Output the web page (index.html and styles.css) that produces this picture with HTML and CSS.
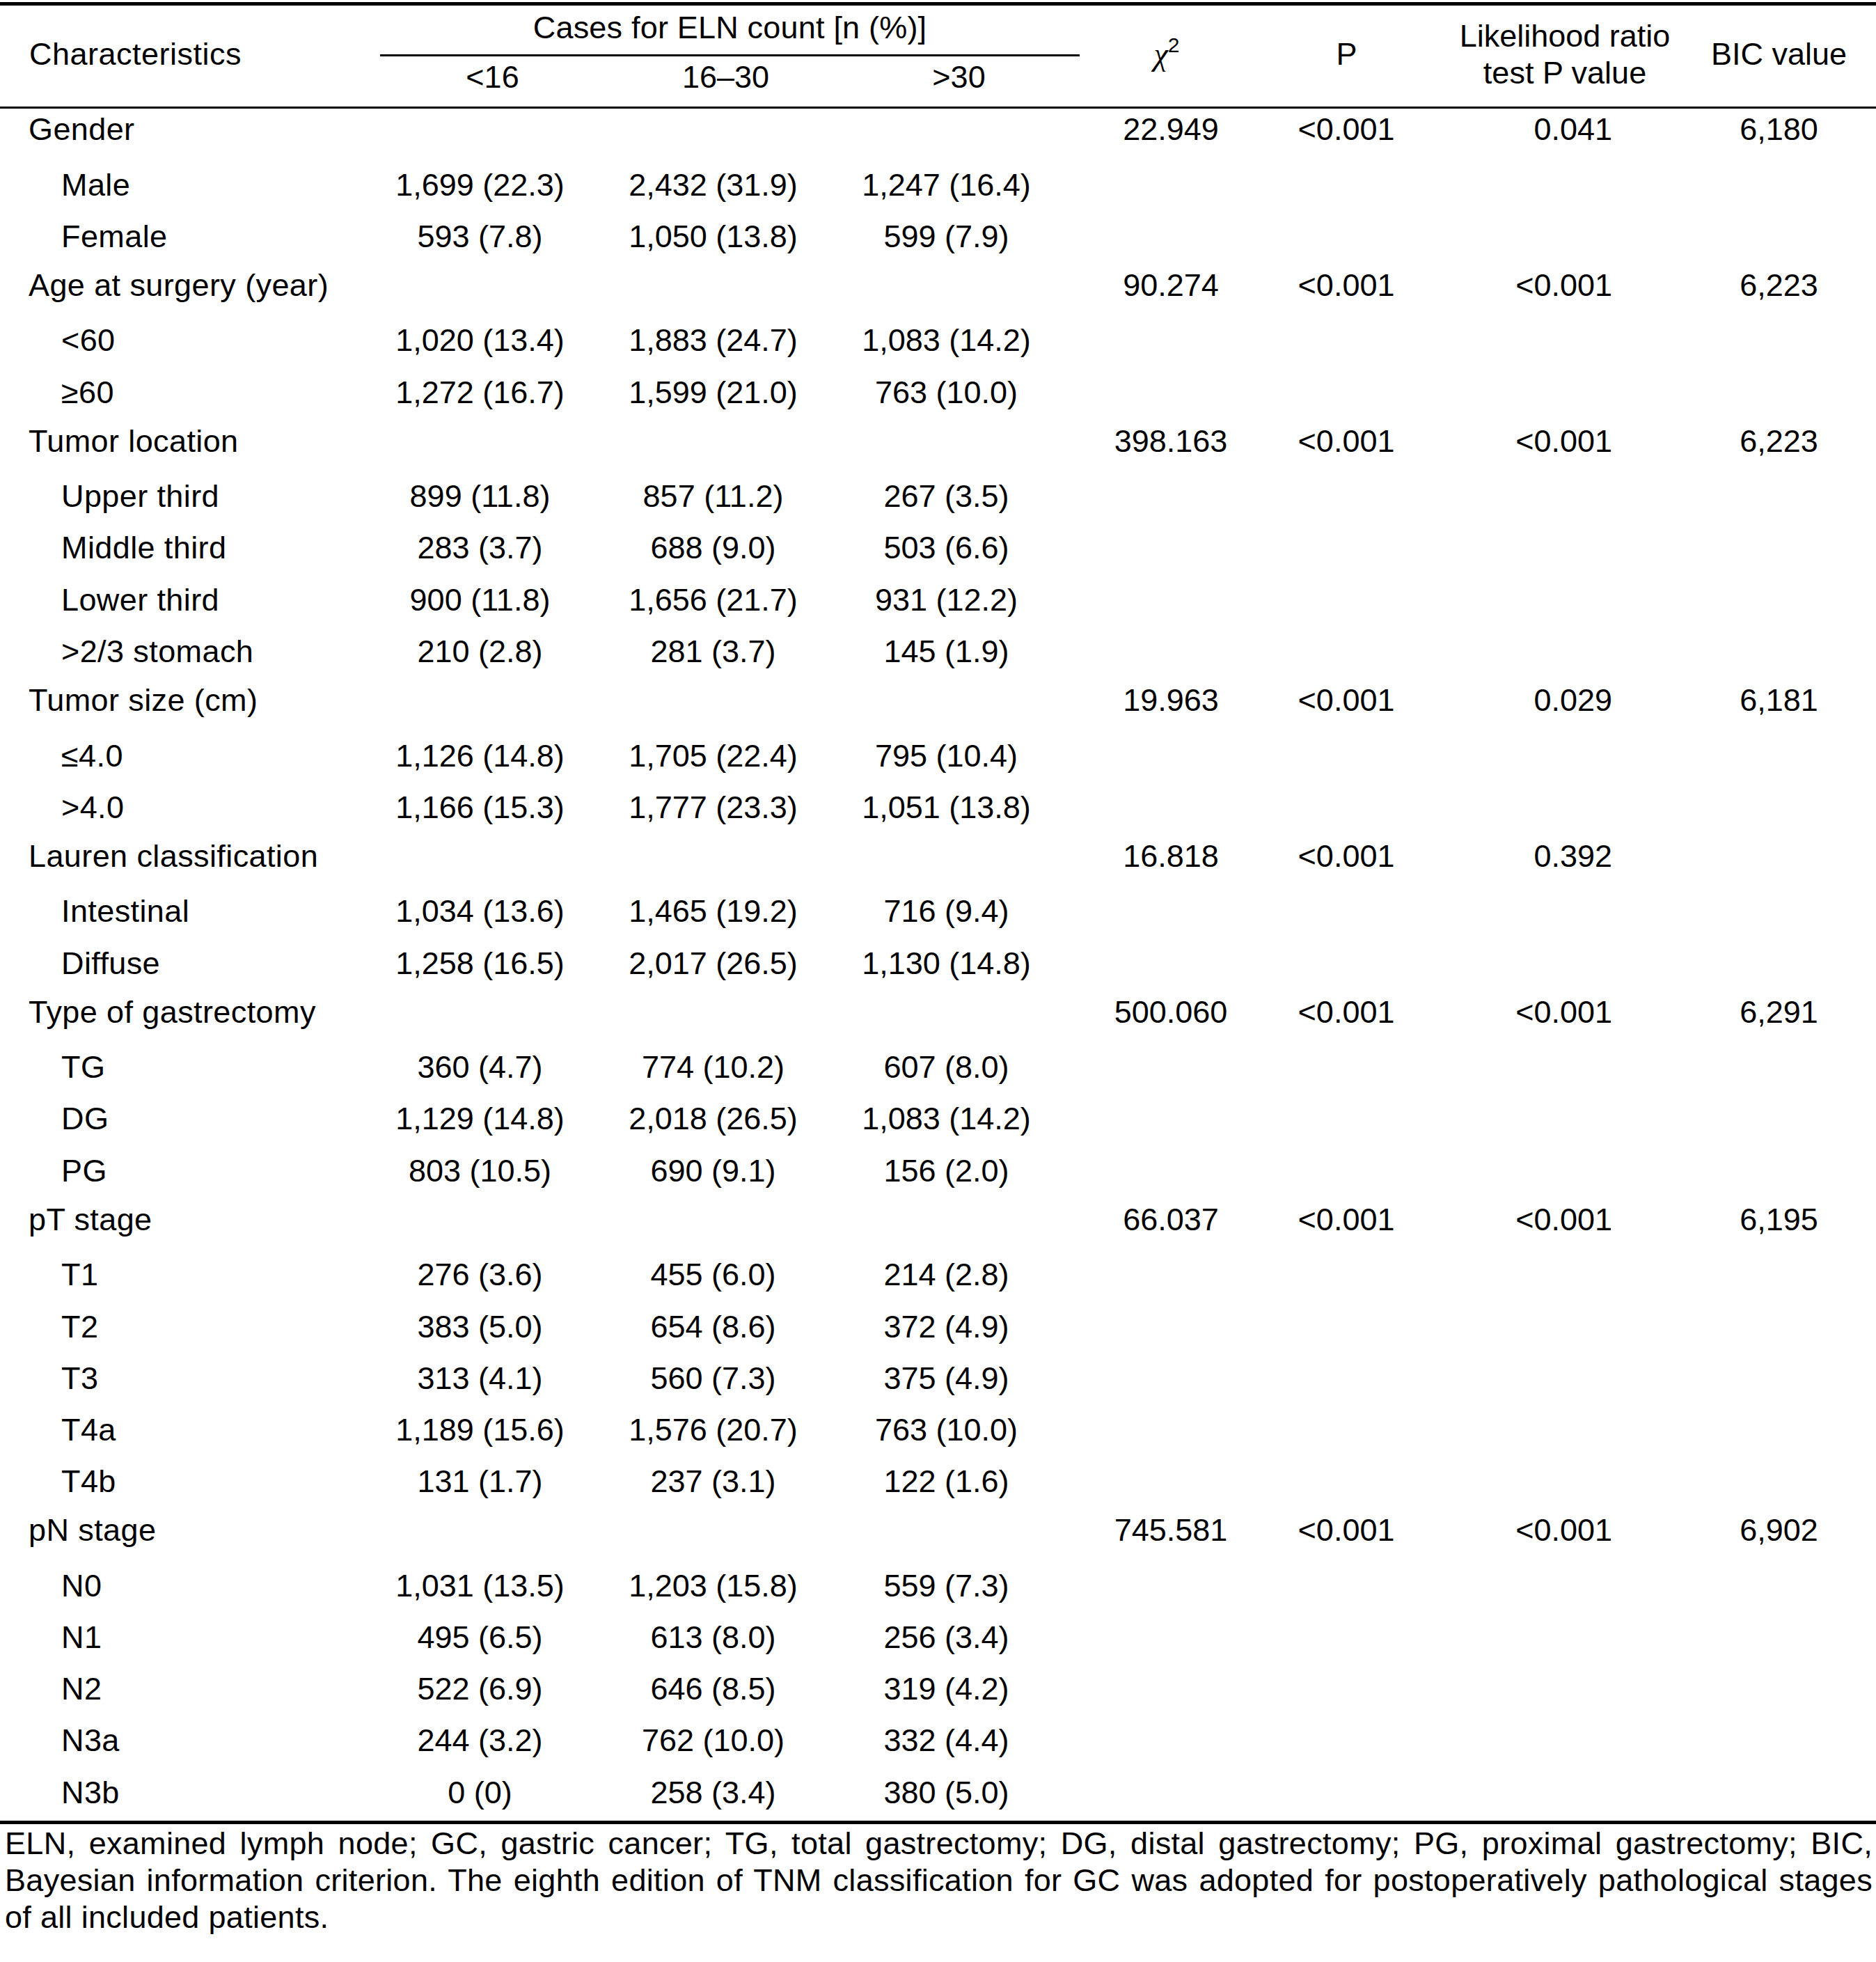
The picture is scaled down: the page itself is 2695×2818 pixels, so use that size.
FILE: index.html
```html
<!DOCTYPE html>
<html lang="en">
<head>
<meta charset="utf-8">
<title>ELN count table</title>
<link rel="stylesheet" href="styles.css">
</head>
<body>
<div class="page">
<table class="tbl">
  <colgroup>
    <col class="c-lab"><col class="c-n"><col class="c-n"><col class="c-n"><col class="c-chi"><col class="c-p"><col class="c-lr"><col class="c-bic">
  </colgroup>
  <thead>
    <tr class="h1">
      <th rowspan="2" class="h-lab">Characteristics</th>
      <th colspan="3" class="h-group">Cases for ELN count [n (%)]</th>
      <th rowspan="2" class="h-chi"><span class="chi">χ</span><sup>2</sup></th>
      <th rowspan="2" class="h-p">P</th>
      <th rowspan="2" class="h-lr">Likelihood ratio<br>test P value</th>
      <th rowspan="2" class="h-bic">BIC value</th>
    </tr>
    <tr class="h2">
      <th>&lt;16</th>
      <th>16–30</th>
      <th>&gt;30</th>
    </tr>
  </thead>
  <tbody>
    <tr class="cat"><td class="lab">Gender</td><td class="n"></td><td class="n"></td><td class="n"></td><td class="chiv">22.949</td><td class="pv">&lt;0.001</td><td class="lr">0.041</td><td class="bic">6,180</td></tr>
    <tr class="sub"><td class="lab">Male</td><td class="n">1,699 (22.3)</td><td class="n">2,432 (31.9)</td><td class="n">1,247 (16.4)</td><td></td><td></td><td></td><td></td></tr>
    <tr class="sub"><td class="lab">Female</td><td class="n">593 (7.8)</td><td class="n">1,050 (13.8)</td><td class="n">599 (7.9)</td><td></td><td></td><td></td><td></td></tr>

    <tr class="cat"><td class="lab">Age at surgery (year)</td><td class="n"></td><td class="n"></td><td class="n"></td><td class="chiv">90.274</td><td class="pv">&lt;0.001</td><td class="lr">&lt;0.001</td><td class="bic">6,223</td></tr>
    <tr class="sub"><td class="lab">&lt;60</td><td class="n">1,020 (13.4)</td><td class="n">1,883 (24.7)</td><td class="n">1,083 (14.2)</td><td></td><td></td><td></td><td></td></tr>
    <tr class="sub"><td class="lab">≥60</td><td class="n">1,272 (16.7)</td><td class="n">1,599 (21.0)</td><td class="n">763 (10.0)</td><td></td><td></td><td></td><td></td></tr>

    <tr class="cat"><td class="lab">Tumor location</td><td class="n"></td><td class="n"></td><td class="n"></td><td class="chiv">398.163</td><td class="pv">&lt;0.001</td><td class="lr">&lt;0.001</td><td class="bic">6,223</td></tr>
    <tr class="sub"><td class="lab">Upper third</td><td class="n">899 (11.8)</td><td class="n">857 (11.2)</td><td class="n">267 (3.5)</td><td></td><td></td><td></td><td></td></tr>
    <tr class="sub"><td class="lab">Middle third</td><td class="n">283 (3.7)</td><td class="n">688 (9.0)</td><td class="n">503 (6.6)</td><td></td><td></td><td></td><td></td></tr>
    <tr class="sub"><td class="lab">Lower third</td><td class="n">900 (11.8)</td><td class="n">1,656 (21.7)</td><td class="n">931 (12.2)</td><td></td><td></td><td></td><td></td></tr>
    <tr class="sub"><td class="lab">&gt;2/3 stomach</td><td class="n">210 (2.8)</td><td class="n">281 (3.7)</td><td class="n">145 (1.9)</td><td></td><td></td><td></td><td></td></tr>

    <tr class="cat"><td class="lab">Tumor size (cm)</td><td class="n"></td><td class="n"></td><td class="n"></td><td class="chiv">19.963</td><td class="pv">&lt;0.001</td><td class="lr">0.029</td><td class="bic">6,181</td></tr>
    <tr class="sub"><td class="lab">≤4.0</td><td class="n">1,126 (14.8)</td><td class="n">1,705 (22.4)</td><td class="n">795 (10.4)</td><td></td><td></td><td></td><td></td></tr>
    <tr class="sub"><td class="lab">&gt;4.0</td><td class="n">1,166 (15.3)</td><td class="n">1,777 (23.3)</td><td class="n">1,051 (13.8)</td><td></td><td></td><td></td><td></td></tr>

    <tr class="cat"><td class="lab">Lauren classification</td><td class="n"></td><td class="n"></td><td class="n"></td><td class="chiv">16.818</td><td class="pv">&lt;0.001</td><td class="lr">0.392</td><td class="bic"></td></tr>
    <tr class="sub"><td class="lab">Intestinal</td><td class="n">1,034 (13.6)</td><td class="n">1,465 (19.2)</td><td class="n">716 (9.4)</td><td></td><td></td><td></td><td></td></tr>
    <tr class="sub"><td class="lab">Diffuse</td><td class="n">1,258 (16.5)</td><td class="n">2,017 (26.5)</td><td class="n">1,130 (14.8)</td><td></td><td></td><td></td><td></td></tr>

    <tr class="cat"><td class="lab">Type of gastrectomy</td><td class="n"></td><td class="n"></td><td class="n"></td><td class="chiv">500.060</td><td class="pv">&lt;0.001</td><td class="lr">&lt;0.001</td><td class="bic">6,291</td></tr>
    <tr class="sub"><td class="lab">TG</td><td class="n">360 (4.7)</td><td class="n">774 (10.2)</td><td class="n">607 (8.0)</td><td></td><td></td><td></td><td></td></tr>
    <tr class="sub"><td class="lab">DG</td><td class="n">1,129 (14.8)</td><td class="n">2,018 (26.5)</td><td class="n">1,083 (14.2)</td><td></td><td></td><td></td><td></td></tr>
    <tr class="sub"><td class="lab">PG</td><td class="n">803 (10.5)</td><td class="n">690 (9.1)</td><td class="n">156 (2.0)</td><td></td><td></td><td></td><td></td></tr>

    <tr class="cat"><td class="lab">pT stage</td><td class="n"></td><td class="n"></td><td class="n"></td><td class="chiv">66.037</td><td class="pv">&lt;0.001</td><td class="lr">&lt;0.001</td><td class="bic">6,195</td></tr>
    <tr class="sub"><td class="lab">T1</td><td class="n">276 (3.6)</td><td class="n">455 (6.0)</td><td class="n">214 (2.8)</td><td></td><td></td><td></td><td></td></tr>
    <tr class="sub"><td class="lab">T2</td><td class="n">383 (5.0)</td><td class="n">654 (8.6)</td><td class="n">372 (4.9)</td><td></td><td></td><td></td><td></td></tr>
    <tr class="sub"><td class="lab">T3</td><td class="n">313 (4.1)</td><td class="n">560 (7.3)</td><td class="n">375 (4.9)</td><td></td><td></td><td></td><td></td></tr>
    <tr class="sub"><td class="lab">T4a</td><td class="n">1,189 (15.6)</td><td class="n">1,576 (20.7)</td><td class="n">763 (10.0)</td><td></td><td></td><td></td><td></td></tr>
    <tr class="sub"><td class="lab">T4b</td><td class="n">131 (1.7)</td><td class="n">237 (3.1)</td><td class="n">122 (1.6)</td><td></td><td></td><td></td><td></td></tr>

    <tr class="cat"><td class="lab">pN stage</td><td class="n"></td><td class="n"></td><td class="n"></td><td class="chiv">745.581</td><td class="pv">&lt;0.001</td><td class="lr">&lt;0.001</td><td class="bic">6,902</td></tr>
    <tr class="sub"><td class="lab">N0</td><td class="n">1,031 (13.5)</td><td class="n">1,203 (15.8)</td><td class="n">559 (7.3)</td><td></td><td></td><td></td><td></td></tr>
    <tr class="sub"><td class="lab">N1</td><td class="n">495 (6.5)</td><td class="n">613 (8.0)</td><td class="n">256 (3.4)</td><td></td><td></td><td></td><td></td></tr>
    <tr class="sub"><td class="lab">N2</td><td class="n">522 (6.9)</td><td class="n">646 (8.5)</td><td class="n">319 (4.2)</td><td></td><td></td><td></td><td></td></tr>
    <tr class="sub"><td class="lab">N3a</td><td class="n">244 (3.2)</td><td class="n">762 (10.0)</td><td class="n">332 (4.4)</td><td></td><td></td><td></td><td></td></tr>
    <tr class="sub last"><td class="lab">N3b</td><td class="n">0 (0)</td><td class="n">258 (3.4)</td><td class="n">380 (5.0)</td><td></td><td></td><td></td><td></td></tr>
  </tbody>
</table>
<p class="note">
  <span class="line">ELN, examined lymph node; GC, gastric cancer; TG, total gastrectomy; DG, distal gastrectomy; PG, proximal gastrectomy; BIC,</span>
  <span class="line">Bayesian information criterion. The eighth edition of TNM classification for GC was adopted for postoperatively pathological stages</span>
  <span class="line-end">of all included patients.</span>
</p>
</div>
</body>
</html>
```

FILE: styles.css
```css
html, body {
  margin: 0;
  padding: 0;
  background: #ffffff;
}

body {
  font-family: "Liberation Sans", Arial, Helvetica, sans-serif;
  font-size: 45px;
  line-height: 53px;
  color: #000000;
}

.page {
  width: 2695px;
  padding-top: 3px;
}

.tbl {
  width: 2695px;
  table-layout: fixed;
  border-collapse: separate;
  border-spacing: 0;
}

.c-lab { width: 546px; }
.c-n { width: 335px; }
.c-chi { width: 262px; }
.c-p { width: 261px; }
.c-lr { width: 360px; }
.c-bic { width: 261px; }

.tbl th,
.tbl td {
  padding: 0;
  font-weight: normal;
  white-space: nowrap;
}

/* header */
.h1 th {
  border-top: 5px solid #000;
  border-bottom: 3px solid #000;
  vertical-align: middle;
  text-align: center;
  padding-bottom: 6px;
}

.h1 .h-lab {
  text-align: left;
  padding-left: 42px;
  letter-spacing: 0.5px;
}

.h1 .h-group {
  padding: 5px 0 12px 0;
  letter-spacing: 0.2px;
}

.h1 .h-p,
.h1 .h-bic {
  padding-right: 18px;
}

.h1 .h-lr {
  padding-right: 12px;
}

.h1 .h-chi {
  padding-right: 12px;
}

.chi {
  font-family: "Liberation Serif", "Times New Roman", serif;
  font-style: italic;
  font-size: 46px;
}

.h-chi sup {
  font-size: 30px;
  line-height: 0;
  vertical-align: 18px;
}

.h2 th {
  border-bottom: 3px solid #000;
  text-align: center;
  padding: 3px 12px 16px 0;
}

/* body */
.cat td {
  padding-top: 3px;
  padding-bottom: 19.5px;
}

.sub td {
  padding-top: 7px;
  padding-bottom: 14.2px;
}

.sub.last td {
  border-bottom: 5px solid #000;
}

.lab {
  text-align: left;
  padding-left: 41px;
  letter-spacing: 0.4px;
}

.cat .lab {
  padding-left: 41px;
}

.sub .lab {
  padding-left: 88px;
}

.n {
  text-align: center;
  padding-right: 48px !important;
}

.chiv {
  text-align: center;
}

.pv {
  text-align: center;
  padding-right: 19px !important;
}

.lr {
  text-align: right;
  padding-right: 118px !important;
}

.bic {
  text-align: center;
  padding-right: 18px !important;
}

/* footnote */
.note {
  margin: 0;
  padding: 1px 5px 0 7px;
  letter-spacing: 0.3px;
}

.note .line {
  display: block;
  text-align: justify;
  text-align-last: justify;
}

.note .line-end {
  display: block;
  text-align: left;
}
```
